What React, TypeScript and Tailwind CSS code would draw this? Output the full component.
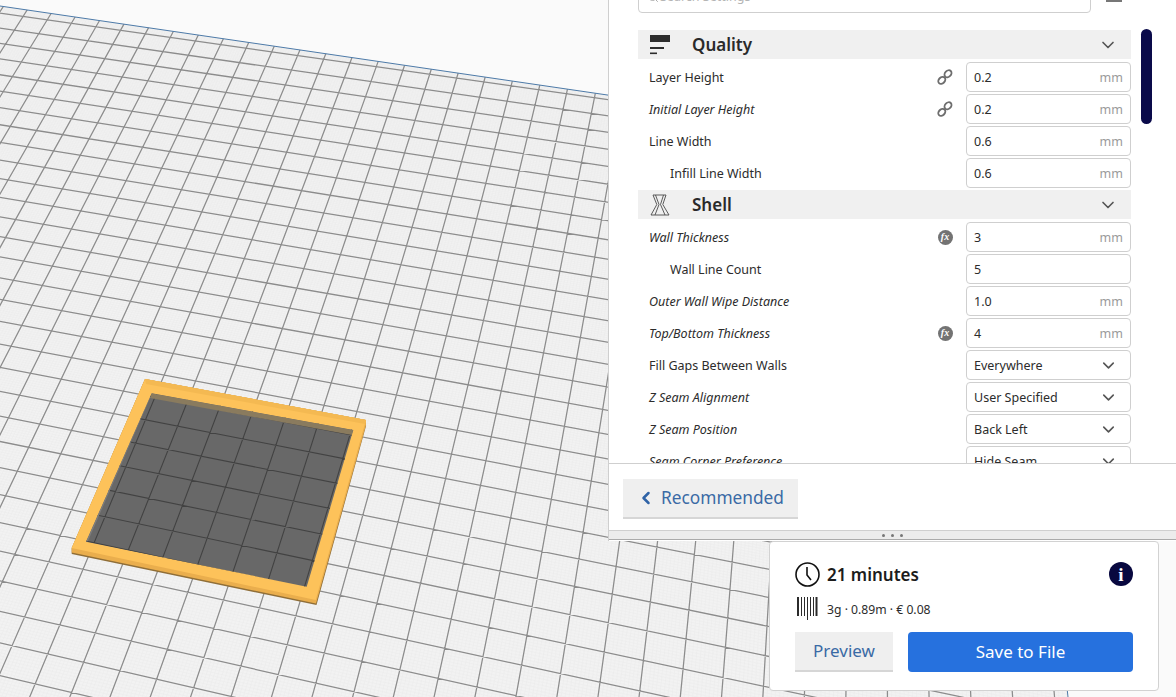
import { ChevronDown, ChevronLeft, Search } from "lucide-react";

type Linha = {
  nome: string;
  valor: string;
  unidade?: string;
  italico?: boolean;
  recuo?: boolean;
  icone?: "link" | "fx";
  lista?: boolean;
};

const qualidade: Linha[] = [
  { nome: "Layer Height", valor: "0.2", unidade: "mm", icone: "link" },
  { nome: "Initial Layer Height", valor: "0.2", unidade: "mm", italico: true, icone: "link" },
  { nome: "Line Width", valor: "0.6", unidade: "mm" },
  { nome: "Infill Line Width", valor: "0.6", unidade: "mm", recuo: true },
];

const casca: Linha[] = [
  { nome: "Wall Thickness", valor: "3", unidade: "mm", italico: true, icone: "fx" },
  { nome: "Wall Line Count", valor: "5", recuo: true },
  { nome: "Outer Wall Wipe Distance", valor: "1.0", unidade: "mm", italico: true },
  { nome: "Top/Bottom Thickness", valor: "4", unidade: "mm", italico: true, icone: "fx" },
  { nome: "Fill Gaps Between Walls", valor: "Everywhere", lista: true },
  { nome: "Z Seam Alignment", valor: "User Specified", italico: true, lista: true },
  { nome: "Z Seam Position", valor: "Back Left", italico: true, lista: true },
  { nome: "Seam Corner Preference", valor: "Hide Seam", italico: true, lista: true },
];

// Perspective of the build plate: 4x6 cells taken from the grid seen inside the model
function projetor() {
  const [x0, y0, x1, y1, x2, y2, x3, y3] = [186.7, 403.3, 316.7, 428.3, 268.3, 580, 128.3, 550];
  const dx1 = x1 - x2;
  const dx2 = x3 - x2;
  const sx = x0 - x1 + x2 - x3;
  const dy1 = y1 - y2;
  const dy2 = y3 - y2;
  const sy = y0 - y1 + y2 - y3;
  const den = dx1 * dy2 - dx2 * dy1;
  const g = (sx * dy2 - dx2 * sy) / den;
  const h = (dx1 * sy - sx * dy1) / den;
  const a = x1 - x0 + g * x1;
  const b = x3 - x0 + h * x3;
  const d = y1 - y0 + g * y1;
  const e = y3 - y0 + h * y3;
  return (i: number, j: number): [number, number] => {
    const u = i / 4;
    const v = j / 6;
    const w = g * u + h * v + 1;
    return [(a * u + b * v + x0) / w, (d * u + e * v + y0) / w];
  };
}

function caminhoGrade(passo: number) {
  const p = projetor();
  const iMin = -14;
  const iMax = 36;
  const jMin = -20;
  const jMax = 12;
  let out = "";
  const seg = (a: [number, number], b: [number, number]) => {
    out += `M${a[0].toFixed(1)} ${a[1].toFixed(1)}L${b[0].toFixed(1)} ${b[1].toFixed(1)}`;
  };
  for (let i = iMin; i <= iMax; i += passo) seg(p(i, jMin), p(i, jMax));
  for (let j = jMin; j <= jMax; j += passo) seg(p(iMin, j), p(iMax, j));
  return out;
}

const gradeGrossa = caminhoGrade(1);
const gradeFina = caminhoGrade(0.1);

function Viewport() {
  return (
    <svg className="absolute inset-0" width={1176} height={697} viewBox="0 0 1176 697">
      <defs>
        <clipPath id="mesa">
          <polygon points="0,6 1010,154 1068,697 0,697" />
        </clipPath>
        <clipPath id="furo">
          <polygon points="151.7,393.3 353.3,430 306.7,586.7 86,541.7" />
        </clipPath>
      </defs>
      <rect width={1176} height={697} fill="#fafafa" />
      <g clipPath="url(#mesa)">
        <rect width={1176} height={697} fill="#f2f2f2" />
        <path d={gradeFina} stroke="#eaeaea" strokeWidth={0.5} fill="none" />
        <path d={gradeGrossa} stroke="#8c8c8c" strokeWidth={1.25} fill="none" />
      </g>
      <polyline points="0,6 1010,154 1068,697" fill="none" stroke="#4d7aa8" strokeWidth={1} />

      {/* model */}
      <polygon points="145,379 366,420 366,426 316.5,605 71.7,554 71.7,548" fill="#8f6e38" />
      <polygon points="145,379 366,420 366,425 316,603.5 71.7,552.5 71.7,548" fill="#eaae4d" />
      <polygon points="145,379 366,420 315.7,600 71.7,548" fill="#fdc25a" />
      <polygon points="145,379 366,420 365,424 146,384" fill="#f4b952" />
      <polygon points="151.7,393.3 353.3,430 306.7,586.7 86,541.7" fill="#686868" />
      <g clipPath="url(#furo)">
        <path d={gradeGrossa} stroke="#424242" strokeWidth={1.1} fill="none" />
        <polygon points="151.7,393.3 353.3,430 352,435 150,398" fill="#8a7b5e" />
        <polygon points="151.7,393.3 150,398 88,541 86,541.7" fill="#7d7d7d" />
      </g>
    </svg>
  );
}

function IconeElo() {
  return (
    <svg width="16" height="16" viewBox="0 0 16 16" fill="none" stroke="#6e6e6e" strokeWidth="1.9">
      <ellipse cx="4.8" cy="11.4" rx="3.9" ry="3" transform="rotate(-45 4.8 11.4)" />
      <ellipse cx="11" cy="4.8" rx="3.9" ry="3" transform="rotate(-45 11 4.8)" />
    </svg>
  );
}

function IconeFx() {
  return (
    <span className="flex h-[15px] w-[15px] items-center justify-center rounded-full bg-[#737373] font-['Liberation_Serif',serif] text-[10px] font-bold italic leading-none text-white">
      fx
    </span>
  );
}

function Campo({ linha }: { linha: Linha }) {
  return (
    <div className="flex h-8 items-center">
      <span
        className={`flex-1 pt-[2px] text-[12.5px] text-[#2c2c2c] ${linha.italico ? "italic" : ""} ${linha.recuo ? "pl-[32px]" : "pl-[11px]"}`}
      >
        {linha.nome}
      </span>
      <span className="mr-[13px] flex w-4 justify-center">
        {linha.icone === "link" && <IconeElo />}
        {linha.icone === "fx" && <IconeFx />}
      </span>
      <div className="flex h-[30px] w-[165px] items-center justify-between rounded-sm border border-[#cfcfcf] bg-white pl-[7px] pr-[7px] pt-[2px] text-[12.5px] text-[#2c2c2c]">
        <span>{linha.valor}</span>
        {linha.unidade && <span className="text-[#9a9a9a]">{linha.unidade}</span>}
        {linha.lista && <ChevronDown size={19} strokeWidth={2} className="mr-[5px] -mt-[2px] text-[#555]" />}
      </div>
    </div>
  );
}

function Categoria({ nome, icone }: { nome: string; icone: React.ReactNode }) {
  return (
    <div className="flex h-8 items-start pt-px">
      <div className="flex h-[29px] w-full items-center bg-[#f0f0f0] pl-[12px] pr-[13px]">
        <span className="flex w-[42px] items-center">{icone}</span>
        <span className="flex-1 text-[17px] font-semibold text-[#2a2a2a]">{nome}</span>
        <ChevronDown size={20} strokeWidth={2} className="text-[#555]" />
      </div>
    </div>
  );
}

function Painel() {
  return (
    <div className="absolute right-0 top-0 flex h-[541px] w-[568px] flex-col border-l border-[#cfcfcf] bg-white">
      <div className="flex h-[463px] flex-col overflow-hidden">
        <div className="-mt-[19px] flex shrink-0 items-center pl-[29px]">
          <div className="flex h-[32px] w-[453px] items-center gap-px rounded-sm border border-[#cfcfcf] px-2 text-[12.5px] text-[#b5b5b5]">
            <Search size={12} strokeWidth={2} className="text-[#aaa]" />
            <span>Search Settings</span>
          </div>
          <div className="-mt-[5px] ml-[15px] flex w-4 flex-col gap-[4px]">
            <span className="h-[2px] bg-[#777]" />
            <span className="h-[2px] bg-[#777]" />
            <span className="h-[2px] bg-[#777]" />
          </div>
        </div>
        <div className="mt-[16px] flex pl-[29px]">
          <div className="w-[493px] shrink-0">
            <Categoria
              nome="Quality"
              icone={
                <svg width="20" height="20" viewBox="0 0 20 20" fill="#2d2d2d">
                  <rect x="0" y="0" width="20" height="7" />
                  <rect x="0" y="12" width="14" height="2" />
                  <rect x="0" y="17.5" width="7" height="1.6" />
                </svg>
              }
            />
            {qualidade.map((l) => (
              <Campo key={l.nome} linha={l} />
            ))}
            <Categoria
              nome="Shell"
              icone={
                <svg width="20" height="22" viewBox="0 0 20 22" fill="none" stroke="#4a4a4a" strokeWidth="0.9">
                  <path d="M3 1h13l-3.2 9.5L19 21H1l5.8-10.5z" />
                  <path d="M5.5 1 9 10.5 5 21M13.5 1 10.5 10.5 15 21" />
                </svg>
              }
            />
            {casca.map((l) => (
              <Campo key={l.nome} linha={l} />
            ))}
          </div>
          <div className="ml-[10px] h-[95px] w-[11px] shrink-0 rounded-full bg-[#0a0a4a]" />
        </div>
      </div>
      <div className="flex h-[68px] items-center border-y border-[#cfcfcf] px-[14px] pt-[3px]">
        <button className="flex h-[40px] w-[175px] items-center gap-[5px] border-b-2 border-[#d6d6d6] bg-[#efefef] pl-[13px] text-[17.3px] text-[#3a6aa5]">
          <ChevronLeft size={20} strokeWidth={3} className="text-[#2f63a6]" />
          Recommended
        </button>
      </div>
      <div className="flex h-[9px] items-center justify-center gap-[6px] border-b border-[#aaa] bg-[#ececec]">
        <span className="h-[3px] w-[3px] rounded-full bg-[#777]" />
        <span className="h-[3px] w-[3px] rounded-full bg-[#777]" />
        <span className="h-[3px] w-[3px] rounded-full bg-[#777]" />
      </div>
    </div>
  );
}

function CartaoImpressao() {
  return (
    <div className="absolute left-[769px] top-[541px] flex h-[150px] w-[390px] flex-col rounded border border-[#d2d2d2] bg-white px-[25px] pt-[20px]">
      <div className="flex h-6 items-center">
        <svg width="25" height="25" viewBox="0 0 25 25" fill="none" stroke="#111" strokeWidth="1.6">
          <circle cx="12.5" cy="12.5" r="11.5" />
          <path d="M12 5v8l4 5" />
        </svg>
        <span className="ml-[7px] flex-1 pt-[2px] text-[17px] font-semibold text-[#1c1c1c]">21 minutes</span>
        <span className="flex h-6 w-6 items-center justify-center rounded-full bg-[#08083f] font-['Liberation_Serif',serif] text-[19px] font-bold leading-none text-white">
          i
        </span>
      </div>
      <div className="ml-[2px] mt-[11px] flex h-6 items-center">
        <svg width="22" height="24" viewBox="0 0 22 24" fill="#2b2b2b">
          <rect x="0" y="0" width="2" height="19" />
          <rect x="4" y="0" width="1" height="19" />
          <rect x="7" y="0" width="1" height="19" />
          <rect x="10" y="0" width="1" height="23" />
          <rect x="13" y="0" width="1" height="19" />
          <rect x="16" y="0" width="1" height="19" />
          <rect x="18.5" y="0" width="2" height="19" />
        </svg>
        <span className="ml-[8px] pt-[2px] text-[12.2px] text-[#2c2c2c]">3g · 0.89m · € 0.08</span>
      </div>
      <div className="mt-[11px] flex gap-[15px]">
        <button className="h-[40px] w-[98px] border-b-2 border-[#d6d6d6] bg-[#efefef] text-[17px] text-[#3a6aa5]">
          Preview
        </button>
        <button className="h-[40px] w-[225px] rounded-sm bg-[#2671de] text-[17px] text-white">Save to File</button>
      </div>
    </div>
  );
}

export default function App() {
  return (
    <div className="relative h-[697px] w-[1176px] overflow-hidden font-['Noto_Sans',sans-serif]">
      <Viewport />
      <Painel />
      <CartaoImpressao />
    </div>
  );
}
